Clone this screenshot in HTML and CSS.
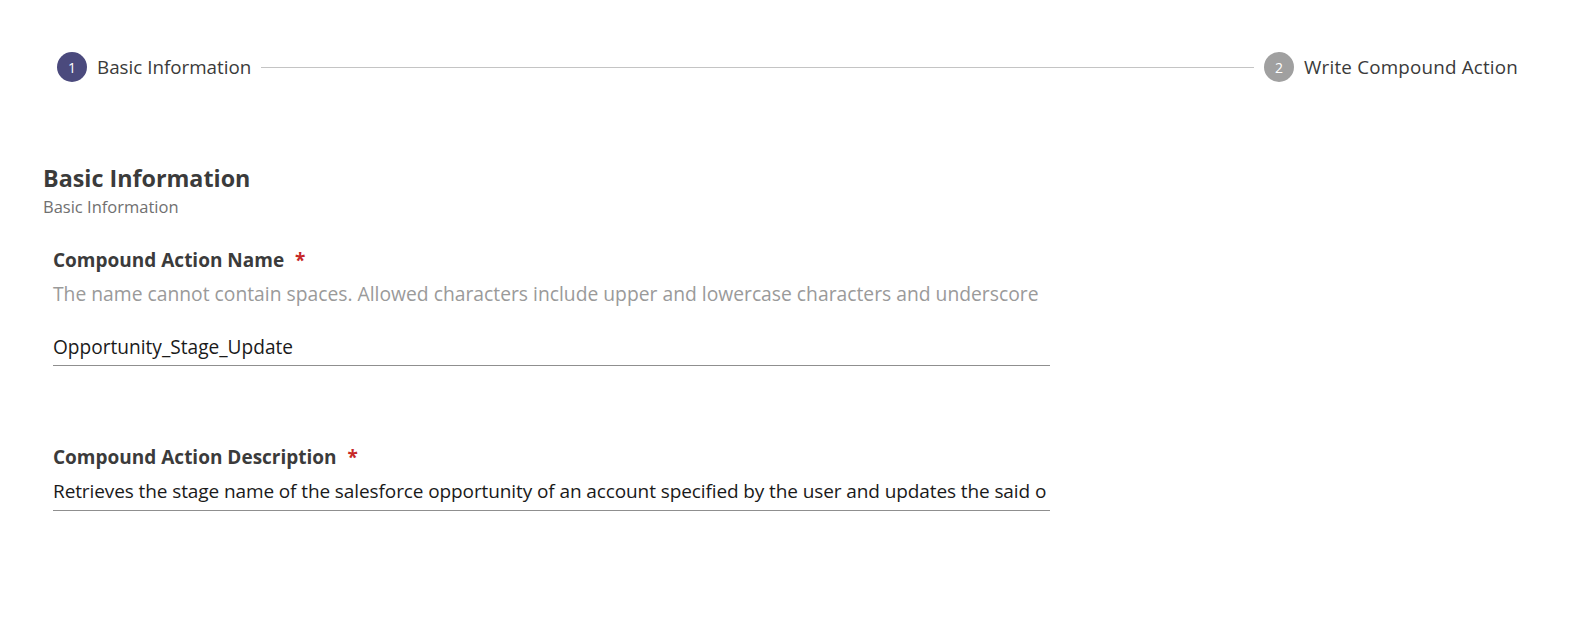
FILE: index.html
```html
<!DOCTYPE html>
<html lang="en">
<head>
<meta charset="utf-8">
<title>Compound Action</title>
<link rel="stylesheet" href="styles.css">
</head>
<body>
<div class="page">
  <div class="stepper">
    <div class="step">
      <span class="step-num active">1</span>
      <span class="step-label">Basic Information</span>
    </div>
    <div class="step-line"></div>
    <div class="step">
      <span class="step-num">2</span>
      <span class="step-label step-label-wide">Write Compound Action</span>
    </div>
  </div>

  <section class="section">
    <h2 class="section-title">Basic Information</h2>
    <div class="section-sub">Basic Information</div>

    <div class="field field-name">
      <div class="field-label">Compound Action Name <span class="req">*</span></div>
      <div class="field-hint">The name cannot contain spaces. Allowed characters include upper and lowercase characters and underscore</div>
      <div class="field-input">Opportunity_Stage_Update</div>
    </div>

    <div class="field field-desc">
      <div class="field-label">Compound Action Description <span class="req">*</span></div>
      <div class="field-input">Retrieves the stage name of the salesforce opportunity of an account specified by the user and updates the said o</div>
    </div>
  </section>
</div>
</body>
</html>
```

FILE: styles.css
```css
html, body {
  margin: 0;
  padding: 0;
  background: #ffffff;
}
body {
  font-family: "Open Sans", "Noto Sans", sans-serif;
  color: #333333;
}
.page {
  padding: 52px 55px 0 43px;
}
.stepper {
  display: flex;
  align-items: center;
  padding-left: 14px;
  height: 30px;
}
.step {
  display: flex;
  align-items: center;
  gap: 10px;
}
.step-num {
  width: 30px;
  height: 30px;
  border-radius: 50%;
  background: #a0a0a0;
  color: #ffffff;
  font-size: 14px;
  display: flex;
  align-items: center;
  justify-content: center;
}
.step-num.active {
  background: #4b4a7d;
}
.step-label {
  font-size: 18.8px;
  color: #3a3a3a;
}
.step-label-wide {
  letter-spacing: 0.2px;
}
.step-line {
  flex: 1;
  height: 1px;
  background: #c4c4c4;
  margin: 0 10px;
}
.section {
  margin-top: 80px;
}
.section-title {
  margin: 0;
  font-size: 23.3px;
  font-weight: 700;
  color: #3b3b3b;
  line-height: 32px;
}
.section-sub {
  font-size: 16.5px;
  color: #707070;
  line-height: 22px;
  margin-top: 2px;
}
.field {
  margin-left: 10px;
  width: 997px;
}
.field-name {
  margin-top: 29px;
}
.field-desc {
  margin-top: 78px;
}
.field-label {
  font-size: 19px;
  font-weight: 700;
  color: #3b3b3b;
  line-height: 26px;
}
.req {
  color: #c62828;
  margin-left: 6px;
}
.field-hint {
  font-size: 19.3px;
  color: #9a9a9a;
  line-height: 26px;
  margin-top: 8px;
}
.field-input {
  font-size: 19.1px;
  color: #1a1a1a;
  line-height: 26px;
  padding: 27px 0 5px;
  border-bottom: 1px solid #8f8f8f;
  white-space: nowrap;
  overflow: hidden;
}
.field-desc .field-input {
  padding-top: 8px;
  padding-bottom: 6px;
  font-size: 19px;
  letter-spacing: -0.1px;
}
```
